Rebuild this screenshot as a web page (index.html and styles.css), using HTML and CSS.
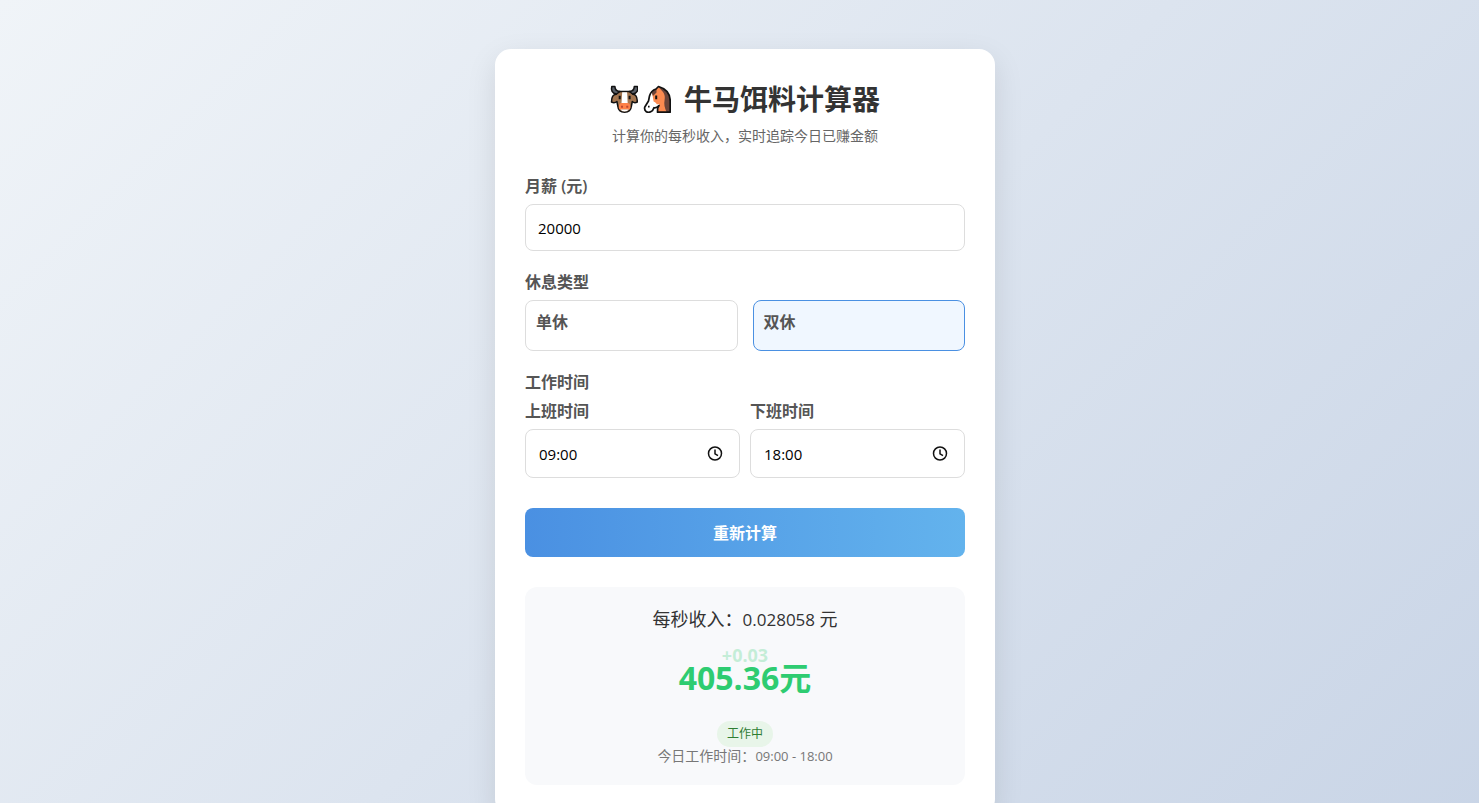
FILE: index.html
```html
<!DOCTYPE html>
<html lang="zh-CN">
<head>
<meta charset="UTF-8">
<meta name="viewport" content="width=device-width, initial-scale=1">
<title>牛马饵料计算器</title>
<link rel="stylesheet" href="styles.css">
</head>
<body>
<main class="card">
  <header class="header">
    <h1 class="title">
      <svg class="emoji" viewBox="0 0 28 28" aria-hidden="true">
        <g stroke="#111" stroke-width="1.5" stroke-linejoin="round">
          <path fill="#a47650" d="M8.500 6.500H20.700L23 9.300C26 9.500 27.300 12 27.300 17C25.500 18 23.500 17.700 22.300 16.500L21.300 21.500C21 25.500 18 27.200 14.600 27.200S8.200 25.500 7.900 21.500L6.900 16.500C5.500 17.700 3.500 18 1.500 17C1.500 12 3 9.500 6.200 9.300Z"/>
          <path fill="#5a6068" d="M1.800 1.500C0.800 5 2 8.500 6.500 9L10 6.500C6.500 6.300 5 4.500 4.900 1.500Z"/>
          <path fill="#5a6068" d="M27.400 1.500C28.400 5 27.200 8.500 22.700 9L19.200 6.500C22.700 6.300 24.200 4.500 24.300 1.500Z"/>
        </g>
        <path fill="#fff" d="M12.200 7.200H17.100L17.700 18.500H11.500Z"/>
        <path fill="#ff8147" d="M9 20Q9.500 17.800 12 18H17.300Q19.700 17.800 20.200 20Q21 23 19.300 24.500H9.900Q8.200 23 9 20Z"/>
        <path fill="#fff" d="M10.500 24.500H18.700Q17.500 26.400 14.600 26.400T10.500 24.500Z"/>
        <path fill="#111" d="M8.700 10.700h2v3.500h-2zM18.600 10.700h2v3.500h-2z"/>
        <path fill="#bd4930" d="M11 20.700h2v2h-2zM16.300 20.700h2v2h-2z"/>
      </svg>
      <svg class="emoji" viewBox="0 0 28 28" aria-hidden="true">
        <path fill="#6b443a" d="M15.500 1.700C22 3.500 27.200 8 27.200 16V27.200H18Z"/>
        <path fill="#fb8a50" d="M10 7L15.500 2L20 7Q22.500 10 21.500 16Q20.500 20 23.500 27H14.500L16 19L10 20L8 12Z"/>
        <path fill="#fff" d="M9.300 9L10.600 16.500Q14 18 14 20.500L11 22.500L8.700 26.500Q6 28 3.500 26.500L1.500 23L5 17L6.500 12Z"/>
        <path fill="#6b443a" d="M8.500 7.500L13.500 3.200V7.500L10 11Z"/>
        <path fill="none" stroke="#111" stroke-width="1.700" stroke-linejoin="round" d="M15.500 1.500C22.500 3.500 27.200 8.500 27.200 16V27.200H14.500L14.700 23L16 20.500Q13 23.500 11 22.700L9.500 25.700Q6 28.500 3 26.500Q1 24.500 1.800 22L5.500 16L6.500 11C7.500 7.500 9.500 5 13 4Z"/>
        <path fill="#111" d="M12.200 10.500h2v3.700h-2zM5 20.800h1.600v1.800H5z"/>
      </svg>
      <span class="title-text">牛马饵料计算器</span>
    </h1>
    <p class="subtitle">计算你的每秒收入，实时追踪今日已赚金额</p>
  </header>

  <form class="form">
    <div class="group">
      <label class="label" for="salary">月薪 (元)</label>
      <input class="field" id="salary" type="text" inputmode="numeric" value="20000">
    </div>

    <fieldset class="group">
      <legend class="label">休息类型</legend>
      <div class="options">
        <label class="option"><input class="option-radio" type="radio" name="rest" value="single">单休</label>
        <label class="option"><input class="option-radio" type="radio" name="rest" value="double" checked>双休</label>
      </div>
    </fieldset>

    <fieldset class="group">
      <legend class="label">工作时间</legend>
      <div class="times">
        <div class="time">
          <label class="label" for="start">上班时间</label>
          <div class="field time-field">
            <input class="time-input" id="start" type="text" value="09:00">
            <svg class="clock" viewBox="0 0 16 16" aria-hidden="true"><circle cx="8" cy="7.500" r="6.500"/><path d="M8 3.500v4.300l3 1.900"/></svg>
          </div>
        </div>
        <div class="time">
          <label class="label" for="end">下班时间</label>
          <div class="field time-field">
            <input class="time-input" id="end" type="text" value="18:00">
            <svg class="clock" viewBox="0 0 16 16" aria-hidden="true"><circle cx="8" cy="7.500" r="6.500"/><path d="M8 3.500v4.300l3 1.900"/></svg>
          </div>
        </div>
      </div>
    </fieldset>

    <button class="submit" type="button">重新计算</button>
  </form>

  <section class="result">
    <p class="rate">每秒收入：<span class="rate-value">0.028058 </span>元</p>
    <div class="amount">405.36元<span class="gain">+0.03</span></div>
    <span class="status">工作中</span>
    <p class="hours">今日工作时间：<span class="hours-value">09:00 - 18:00</span></p>
  </section>
</main>
</body>
</html>
```
FILE: styles.css
```css
* {
  box-sizing: border-box;
  margin: 0;
  padding: 0;
}

html {
  scrollbar-width: none;
}

body {
  min-height: 100vh;
  padding: 49px 20px 49px 31px;
  background: linear-gradient(135deg, #f0f4f8, #c8d4e6);
  color: #333;
  font-family: "Open Sans", "Noto Sans CJK SC", sans-serif;
  font-size: 16px;
}

.card {
  width: 100%;
  max-width: 500px;
  margin: 0 auto;
  padding: 30px;
  border-radius: 16px;
  background: #fff;
  box-shadow: 0 10px 30px rgba(0, 0, 0, 0.1);
}

.header {
  margin-bottom: 30px;
  text-align: center;
}

.title {
  display: flex;
  align-items: center;
  justify-content: center;
  gap: 5px;
  margin-bottom: 8px;
  font-size: 28px;
  line-height: 40px;
}

.emoji {
  width: 28px;
  height: 28px;
}

.title-text {
  margin-left: 8px;
}

.subtitle {
  color: #666;
  font-size: 14px;
  line-height: 18px;
}

.group {
  min-width: 0;
  margin-bottom: 20px;
  border: 0;
}

.label {
  display: block;
  margin-bottom: 6px;
  color: #555;
  font-weight: 600;
  line-height: 23px;
}

.field {
  display: block;
  width: 100%;
  height: 47px;
  padding: 0 12px;
  border: 1px solid #ddd;
  border-radius: 8px;
  background: #fff;
  color: #000;
  font-family: inherit;
  font-size: 15px;
}

.options {
  display: flex;
  gap: 15px;
}

.option {
  flex: 1;
  height: 51px;
  padding: 10px;
  border: 1px solid #ddd;
  border-radius: 8px;
  color: #555;
  font-weight: 600;
  line-height: 23px;
  cursor: pointer;
}

.option:has(:checked) {
  border-color: #4a90e2;
  background: #f0f7ff;
}

.option-radio {
  position: absolute;
  opacity: 0;
}

.times {
  display: flex;
  gap: 10px;
}

.time {
  flex: 1;
  min-width: 0;
}

.time-field {
  display: flex;
  align-items: center;
  height: 49px;
  padding: 0 16px 0 13px;
}

.time-input {
  flex: 1;
  min-width: 0;
  border: 0;
  outline: 0;
  background: transparent;
  color: inherit;
  font: inherit;
}

.clock {
  width: 16px;
  height: 16px;
  fill: none;
  stroke: #111;
  stroke-width: 1.5;
}

.submit {
  display: block;
  width: 100%;
  height: 49px;
  margin-top: 30px;
  padding-bottom: 2px;
  border: 0;
  border-radius: 8px;
  background: linear-gradient(to right, #4a90e2, #63b3ed);
  color: #fff;
  font-family: inherit;
  font-size: 16px;
  font-weight: 600;
  cursor: pointer;
}

.result {
  display: flex;
  flex-direction: column;
  align-items: center;
  margin-top: 30px;
  padding: 20px;
  border-radius: 12px;
  background: #f8f9fb;
}

.rate {
  font-size: 18px;
  line-height: 24px;
}

.rate-value {
  font-size: 17px;
}

.amount {
  position: relative;
  margin: 25px 0 22px;
  color: #2ecc71;
  font-size: 32px;
  font-weight: 700;
  line-height: 42px;
}

.gain {
  position: absolute;
  top: -14px;
  left: 0;
  width: 100%;
  font-size: 18px;
  line-height: 24px;
  text-align: center;
  opacity: 0.25;
}

.status {
  padding: 0 10px;
  border-radius: 13px;
  background: #e8f5e9;
  color: #2e7d32;
  font-size: 12px;
  line-height: 26px;
}

.hours {
  color: #777;
  font-size: 14px;
  line-height: 18px;
}

.hours-value {
  font-size: 13px;
}
```
